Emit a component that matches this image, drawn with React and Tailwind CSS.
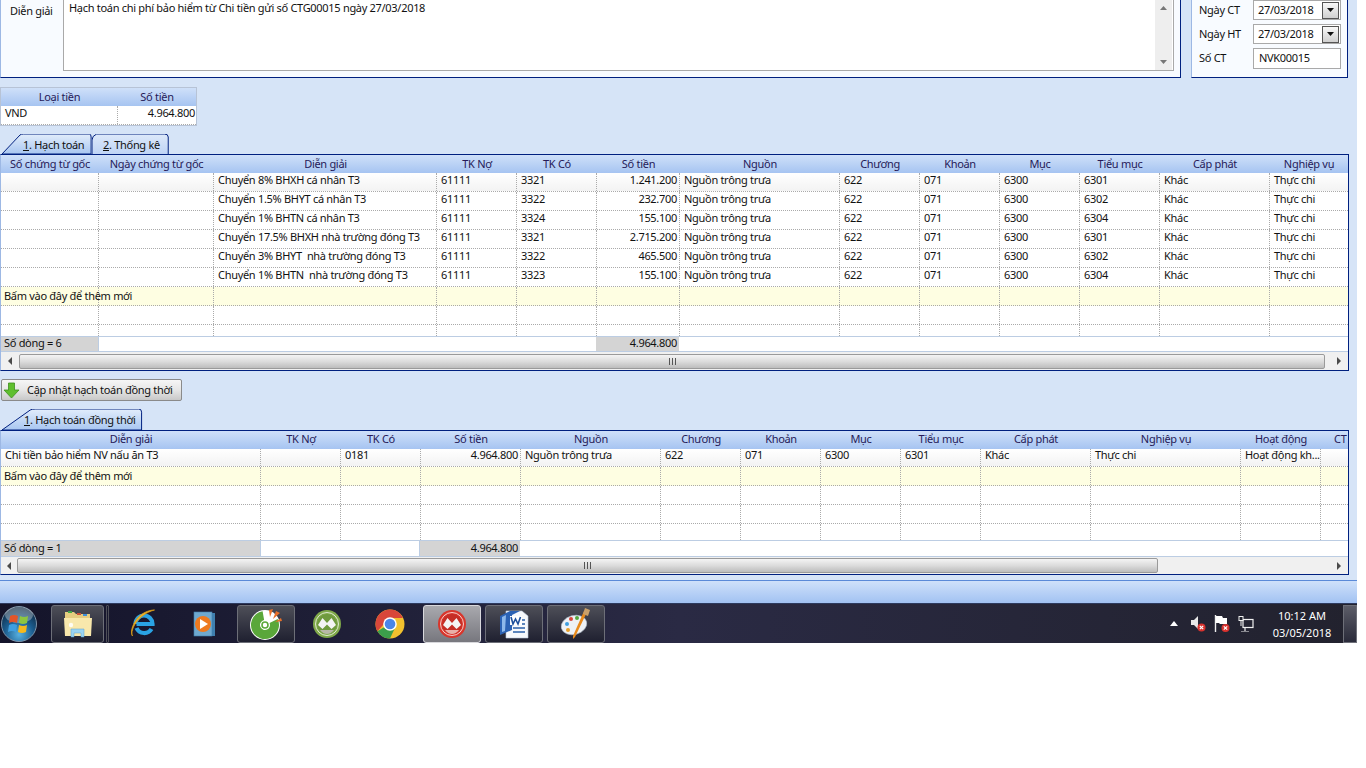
import React from "react";

const NAVY = "border-[#00207f]";

const rowsOne = [
  ["", "", "Chuyển 8% BHXH cá nhân T3", "61111", "3321", "1.241.200", "Nguồn trông trưa", "622", "071", "6300", "6301", "Khác", "Thực chi"],
  ["", "", "Chuyển 1.5% BHYT cá nhân T3", "61111", "3322", "232.700", "Nguồn trông trưa", "622", "071", "6300", "6302", "Khác", "Thực chi"],
  ["", "", "Chuyển 1% BHTN cá nhân T3", "61111", "3324", "155.100", "Nguồn trông trưa", "622", "071", "6300", "6304", "Khác", "Thực chi"],
  ["", "", "Chuyển 17.5% BHXH nhà trường đóng T3", "61111", "3321", "2.715.200", "Nguồn trông trưa", "622", "071", "6300", "6301", "Khác", "Thực chi"],
  ["", "", "Chuyển 3% BHYT  nhà trường đóng T3", "61111", "3322", "465.500", "Nguồn trông trưa", "622", "071", "6300", "6302", "Khác", "Thực chi"],
  ["", "", "Chuyển 1% BHTN  nhà trường đóng T3", "61111", "3323", "155.100", "Nguồn trông trưa", "622", "071", "6300", "6304", "Khác", "Thực chi"],
];
const headOne = ["Số chứng từ gốc", "Ngày chứng từ gốc", "Diễn giải", "TK Nợ", "TK Có", "Số tiền", "Nguồn", "Chương", "Khoản", "Mục", "Tiểu mục", "Cấp phát", "Nghiệp vụ"];

const rowsTwo = [
  ["Chi tiền bảo hiểm NV nấu ăn T3", "", "0181", "4.964.800", "Nguồn trông trưa", "622", "071", "6300", "6301", "Khác", "Thực chi", "Hoạt động kh...", ""],
];
const headTwo = ["Diễn giải", "TK Nợ", "TK Có", "Số tiền", "Nguồn", "Chương", "Khoản", "Mục", "Tiểu mục", "Cấp phát", "Nghiệp vụ", "Hoạt động", "CT"];

// 1 dong trong bang
function Row({ cols, cells, amountCol, className, lead = "leading-[14px]" }) {
  return (
    <div className={`grid ${cols} ${className}`}>
      {cells.map((c, i) => (
        <div
          key={i}
          className={`border-r border-dotted border-[#aaaaaa] last:border-r-0 whitespace-pre ${lead} ${i === amountCol ? "text-right pr-[2px]" : "pl-[4px]"}`}
        >
          {c}
        </div>
      ))}
    </div>
  );
}

// dong "bam vao day de them moi", chu tran sang cot ben
function AddRow({ cols, count }) {
  return (
    <div className={`grid ${cols} h-[19px] border-b border-dotted border-[#aaaaaa] bg-[#fefee2]`}>
      {Array.from({ length: count }).map((_, i) => (
        <div key={i} className="border-r border-dotted border-[#aaaaaa] last:border-r-0 whitespace-nowrap leading-[18px] pl-[3px]">
          {i === 0 ? "Bấm vào đây để thêm mới" : ""}
        </div>
      ))}
    </div>
  );
}

function Head({ cols, items, lead = "leading-[18px]" }) {
  return (
    <div className={`grid ${cols} h-[18px] bg-gradient-to-b from-[#cfe0f9] to-[#a6c4f1] text-[#261a58]`}>
      {items.map((h, i) => (
        <div key={i} className={`overflow-hidden whitespace-nowrap ${lead} ${h === "CT" ? "pl-[13px]" : "text-center"}`}>
          {h}
        </div>
      ))}
    </div>
  );
}

function Arrow({ dir }) {
  return (
    <svg width="6" height="8" viewBox="0 0 6 8">
      <path d={dir === "left" ? "M5 0 L1 4 L5 8 Z" : "M1 0 L5 4 L1 8 Z"} fill="#4a4a4a" />
    </svg>
  );
}

function ScrollBar({ thumb, h, left }) {
  return (
    <div className={`flex items-center bg-[#f0f0f0] ${h}`}>
      <div className={`${left} flex justify-center shrink-0`}>
        <Arrow dir="left" />
      </div>
      <div className={`${thumb} h-[15px] shrink-0 flex items-center justify-center rounded-[2px] border border-[#9a9a9a] bg-gradient-to-b from-[#f4f4f4] via-[#dcdcdc] to-[#bdbdbd]`}>
        <div className="w-[7px] h-[7px] border-x border-[#555555] flex justify-center">
          <div className="w-px h-full bg-[#555555]" />
        </div>
      </div>
      <div className="flex-1 flex justify-end pr-[6px]">
        <Arrow dir="right" />
      </div>
    </div>
  );
}

function Tab({ w, h, pad, active, children }) {
  return (
    <div className={`relative ${w} ${h}`}>
      <svg className="absolute inset-0 w-full h-full" viewBox="0 0 100 20" preserveAspectRatio="none">
        <defs>
          <linearGradient id={active ? "tabOn" : "tabOff"} x1="0" y1="0" x2="0" y2="1">
            <stop offset="0" stopColor={active ? "#e2edfb" : "#dde9fa"} />
            <stop offset="1" stopColor={active ? "#a8c6f1" : "#bfd4f5"} />
          </linearGradient>
        </defs>
        {active ? (
          <path d="M0 20 L20 1 Q21 0 24 0 L97 0 Q99 0 99 3 L99 20 Z" fill="url(#tabOn)" stroke="#00207f" strokeWidth="1" vectorEffect="non-scaling-stroke" />
        ) : (
          <path d="M0 20 L0 6 Q0 2 6 0 L94 0 Q99 0 99 3 L99 20" fill="url(#tabOff)" stroke="#00207f" strokeWidth="1" vectorEffect="non-scaling-stroke" />
        )}
      </svg>
      <span className={`relative block ${pad} leading-[22px] whitespace-nowrap`}>{children}</span>
    </div>
  );
}

function OrbIcon() {
  return (
    <svg width="38" height="38" viewBox="0 0 38 38">
      <defs>
        <radialGradient id="orb" cx="0.5" cy="0.8" r="0.75">
          <stop offset="0" stopColor="#57b0e0" />
          <stop offset="0.55" stopColor="#1b5c8e" />
          <stop offset="1" stopColor="#0e2a44" />
        </radialGradient>
      </defs>
      <circle cx="19" cy="19" r="17.5" fill="url(#orb)" stroke="#7f95aa" strokeWidth="1" />
      <ellipse cx="19" cy="10" rx="14" ry="8" fill="#ffffff" opacity="0.32" />
      <path d="M10 11 Q14 9 18 11 L17 18 Q13 16 9 18 Z" fill="#e2552a" />
      <path d="M20 11 Q24 13 28 11 L27 18 Q23 20 19 18 Z" fill="#8dc63f" />
      <path d="M9 20 Q13 18 17 20 L16 27 Q12 25 8 27 Z" fill="#3f9fe0" />
      <path d="M19 20 Q23 22 27 20 L26 27 Q22 29 18 27 Z" fill="#f6b91c" />
    </svg>
  );
}

function FolderIcon() {
  return (
    <svg width="32" height="30" viewBox="0 0 30 30">
      <path d="M2 3 H11 L13 5 H27 V24 H2 Z" fill="#e6cd80" />
      <rect x="5" y="2" width="4" height="2" fill="#46a84a" />
      <rect x="14" y="4" width="4" height="2" fill="#c8503a" />
      <rect x="20" y="5" width="4" height="2" fill="#3f8fd8" />
      <path d="M1 9 H29 L28 27 H2 Z" fill="#f8e8ac" />
      <path d="M8 20 H21 V28 H18 V24 H11 V28 H8 Z" fill="#9ad4f2" stroke="#5ba3d0" strokeWidth="0.5" />
      <circle cx="8" cy="16" r="2.2" fill="#ffffff" opacity="0.85" />
    </svg>
  );
}

function IeIcon() {
  return (
    <svg width="31" height="32" viewBox="0 0 30 32">
      <path d="M7 16 A8.5 8.5 0 1 1 24 16 H8 M8 20 A8.5 8.5 0 0 0 23 21" fill="none" stroke="#2aa3e4" strokeWidth="4.2" />
      <path d="M4 28 C1 22 10 6 26 2 C20 2 14 5 10 9 C5 14 1 24 4 28 Z" fill="#f0b428" stroke="#d89a18" strokeWidth="0.8" />
    </svg>
  );
}

function PlayerIcon() {
  return (
    <svg width="28" height="30" viewBox="0 0 28 30">
      <rect x="9" y="4" width="17" height="23" fill="#3f7fae" />
      <rect x="5" y="3" width="18" height="24" fill="#6fa9cf" stroke="#3f7fae" strokeWidth="0.6" />
      <circle cx="14" cy="15" r="8" fill="#ee7a1f" />
      <path d="M11 10 L19 15 L11 20 Z" fill="#ffffff" />
    </svg>
  );
}

function CocCocIcon() {
  return (
    <svg width="34" height="34" viewBox="0 0 34 34">
      <circle cx="16" cy="18" r="15" fill="#ffffff" />
      <circle cx="16" cy="18" r="9.5" fill="none" stroke="#5aa73a" strokeWidth="9" strokeDasharray="47 13" transform="rotate(-25 16 18)" />
      <circle cx="16" cy="18" r="3" fill="none" stroke="#5aa73a" strokeWidth="1.6" />
      <path d="M20 3 L24 2 L21 10 Z M27 4 L31 6 L24 12 Z M32 11 L33 14 L26 15 Z" fill="#e8702a" />
    </svg>
  );
}

function MisaIcon({ ring, inner, low }) {
  return (
    <svg width="30" height="30" viewBox="0 0 30 30">
      <circle cx="15" cy="15" r="14" fill={ring} />
      <circle cx="15" cy="15" r="11.5" fill="none" stroke="#ffffff" strokeWidth="1" opacity="0.75" />
      <circle cx="15" cy="15" r="10" fill={inner} />
      <path d="M6 16 L10.5 9 L15 14 L19.5 9 L24 16 L19.5 20 L15 15.5 L10.5 20 Z" fill="#f4f4f4" />
      <path d="M8 21 H22 Q19 25 15 25 Q11 25 8 21 Z" fill={low} />
    </svg>
  );
}

function ChromeIcon() {
  return (
    <svg width="30" height="30" viewBox="0 0 30 30">
      <circle cx="15" cy="15" r="14.5" fill="#f2c12e" />
      <path d="M15 .5 A14.5 14.5 0 0 0 2.4 22.2 L9 15 A6 6 0 0 1 15 9 H28 A14.5 14.5 0 0 0 15 .5 Z" fill="#d8473a" />
      <path d="M2.4 22.2 A14.5 14.5 0 0 0 15 29.5 L20.4 18 H9.6 Z" fill="#3c9f4b" />
      <circle cx="15" cy="15" r="6.8" fill="#ffffff" />
      <circle cx="15" cy="15" r="5.3" fill="#4a86e8" />
    </svg>
  );
}

function WordIcon() {
  return (
    <svg width="32" height="32" viewBox="0 0 32 32">
      <path d="M8 3 H24 L30 8 V30 H8 Z" fill="#f6f8fc" stroke="#b8c6da" strokeWidth="0.6" />
      <path d="M15 12 H27 M15 16 H27 M15 20 H27 M15 24 H27" stroke="#2a5fa8" strokeWidth="1.4" />
      <path d="M2 8 L12 3 H22 L14 7 V22 L2 27 Z" fill="#2b62b4" />
      <path d="M4 9 L8 7 L7 23 L4 24 Z" fill="#8db8ea" />
      <path d="M12 8 H24 V17 H12 Z" fill="#ffffff" />
      <path d="M13 9 L15 16 L17.5 11 L20 16 L22.5 9" fill="none" stroke="#1d4f9c" strokeWidth="1.6" />
    </svg>
  );
}

function PaintIcon() {
  return (
    <svg width="32" height="32" viewBox="0 0 32 32">
      <ellipse cx="14" cy="17" rx="13" ry="9.5" fill="#eef1f5" stroke="#a9b5c4" strokeWidth="0.6" transform="rotate(-15 14 17)" />
      <circle cx="7" cy="16" r="2" fill="#3f9fe0" />
      <circle cx="11" cy="11" r="2" fill="#d8473a" />
      <circle cx="17" cy="10" r="2" fill="#54a93f" />
      <circle cx="8" cy="22" r="2" fill="#e8a02a" />
      <path d="M27 4 L15 29 L13 31 L13 28 L24 3 Z" fill="#e88a1c" />
      <path d="M23 6 L25 0 L30 2 L28 8 Z" fill="#c9a06a" />
    </svg>
  );
}

function TaskItem({ w, framed, lit, children }) {
  const frame = lit
    ? "border border-[#d8d8dc] rounded-[3px] bg-gradient-to-b from-[#a9a9ae] to-[#77777e]"
    : framed
      ? "border border-[#6d6f78] rounded-[3px] bg-gradient-to-b from-[#4e4f58] to-[#1f2030]"
      : "";
  return <div className={`${w} h-[38px] shrink-0 flex items-center justify-center ${frame}`}>{children}</div>;
}

function Speaker() {
  return (
    <svg width="16" height="18" viewBox="0 0 16 18">
      <path d="M1 5 H4 L8 1 V14 L4 10 H1 Z" fill="#e8e8e8" />
      <circle cx="11.5" cy="12.5" r="4" fill="#d8322e" />
      <path d="M9.8 10.8 L13.2 14.2 M13.2 10.8 L9.8 14.2" stroke="#ffffff" strokeWidth="1.2" />
    </svg>
  );
}

function Flag() {
  return (
    <svg width="16" height="18" viewBox="0 0 16 18">
      <path d="M1.5 0 V17" stroke="#f0f0f0" strokeWidth="1.4" />
      <path d="M2 1 H8 L9 3 H13 V9 H6 L5 8 H2 Z" fill="#ffffff" />
      <circle cx="11.5" cy="13" r="4" fill="#d8322e" />
      <path d="M9.8 11.3 L13.2 14.7 M13.2 11.3 L9.8 14.7" stroke="#ffffff" strokeWidth="1.2" />
    </svg>
  );
}

function Network() {
  return (
    <svg width="16" height="16" viewBox="0 0 16 16">
      <rect x="5" y="3.5" width="10" height="8" fill="none" stroke="#f0f0f0" strokeWidth="1.2" />
      <path d="M3 16 H11 M7 12 V15" stroke="#f0f0f0" strokeWidth="1.2" />
      <rect x="1" y="0.5" width="4" height="4" fill="#20222e" stroke="#f0f0f0" strokeWidth="1" />
      <path d="M3 5 V10" stroke="#f0f0f0" strokeWidth="1" />
    </svg>
  );
}

function Combo({ value }) {
  return (
    <div className="h-[20px] border border-[#a9a9a9] bg-white flex items-center pl-[4px] pr-[1px] justify-between">
      <span>{value}</span>
      <div className="w-[17px] h-[17px] border border-[#555555] bg-gradient-to-b from-[#f8f8f8] to-[#d0d0d0] flex items-center justify-center">
        <svg width="7" height="4" viewBox="0 0 7 4">
          <path d="M0 0 H7 L3.5 4 Z" fill="#111111" />
        </svg>
      </div>
    </div>
  );
}

export default function App() {
  const colsOne = "grid-cols-[98px_115px_223px_80px_80px_83px_160px_80px_80px_80px_80px_110px_78px]";
  const colsTwo = "grid-cols-[260px_80px_80px_100px_140px_80px_80px_80px_80px_110px_150px_80px_27px]";
  const blank = Array(13).fill("");
  const rowLine = "h-[19px] border-b border-dotted border-[#aaaaaa]";

  return (
    <div className="w-[1357px] h-[643px] bg-[#d6e4f7] flex flex-col overflow-hidden text-[11px] tracking-[-0.3px] text-[#111111] [font-family:'Liberation_Sans',Arial,sans-serif]">
      {/* phan tren */}
      <div className="h-[78px] flex shrink-0">
        <div className={`w-[1181px] bg-[#f8fbff] border-l border-l-[#9db8e4] border-r border-b ${NAVY} flex pr-[6px]`}>
          <div className="w-[62px] pl-[9px] pt-[3px] leading-[15px]">Diễn giải</div>
          <div className="flex-1 h-[71px] border-x border-b border-[#a9a9a9] bg-white flex justify-between">
            <div className="pl-[5px] pt-[1px] leading-[14px]">Hạch toán chi phí bảo hiểm từ Chi tiền gửi số CTG00015 ngày 27/03/2018</div>
            <div className="w-[17px] mr-[1px] bg-[#eeeeee] flex flex-col justify-between items-center py-[6px]">
              <svg width="7" height="4" viewBox="0 0 7 4"><path d="M0 4 H7 L3.5 0 Z" fill="#777777" /></svg>
              <svg width="7" height="4" viewBox="0 0 7 4"><path d="M0 0 H7 L3.5 4 Z" fill="#777777" /></svg>
            </div>
          </div>
        </div>
        <div className={`ml-[10px] w-[157px] bg-[#f8fbff] border-l border-l-[#9db8e4] border-r border-b ${NAVY} pl-[7px] pr-[6px] flex flex-col gap-[4px]`}>
          <div className="flex items-center h-[20px]">
            <span className="w-[54px]">Ngày CT</span>
            <div className="flex-1"><Combo value="27/03/2018" /></div>
          </div>
          <div className="flex items-center h-[20px]">
            <span className="w-[54px]">Ngày HT</span>
            <div className="flex-1"><Combo value="27/03/2018" /></div>
          </div>
          <div className="flex items-center h-[21px]">
            <span className="w-[54px]">Số CT</span>
            <div className="flex-1 h-[21px] border border-[#a9a9a9] bg-white pl-[5px] leading-[18px]">NVK00015</div>
          </div>
        </div>
      </div>

      {/* bang loai tien */}
      <div className="mt-[9px] w-[197px] h-[39px] shrink-0 border border-[#b7c3d6]">
        <div className="grid grid-cols-[117px_78px] h-[18px] bg-gradient-to-b from-[#cfe0f9] to-[#a6c4f1] text-[#261a58] text-center leading-[18px]">
          <div>Loại tiền</div>
          <div>Số tiền</div>
        </div>
        <div className="grid grid-cols-[117px_78px] h-[19px] bg-white leading-[14px] border-b border-dotted border-[#aaaaaa]">
          <div className="pl-[4px] border-r border-dotted border-[#aaaaaa]">VND</div>
          <div className="text-right pr-[1px]">4.964.800</div>
        </div>
      </div>

      {/* tab 1 */}
      <div className="mt-[8px] flex h-[20px] shrink-0 pl-[2px]">
        <Tab w="w-[90px]" h="h-[20px]" pad="pl-[21px]" active><u>1</u>. Hạch toán</Tab>
        <Tab w="w-[77px]" h="h-[20px]" pad="pl-[11px]"><u>2</u>. Thống kê</Tab>
      </div>

      {/* luoi hach toan */}
      <div className={`w-[1349px] shrink-0 border-t border-r border-b ${NAVY} border-l border-l-[#9db8e4] bg-white`}>
        <Head cols={colsOne} items={headOne} />
        {rowsOne.map((r, i) => (
          <Row key={i} cols={colsOne} cells={r} amountCol={5} className={`${rowLine} ${i === 0 ? "bg-gradient-to-b from-white to-[#f3f3f3]" : ""}`} />
        ))}
        <AddRow cols={colsOne} count={13} />
        <Row cols={colsOne} cells={blank} className={rowLine} />
        <Row cols={colsOne} cells={blank} className="h-[11px]" />
        <div className="flex h-[16px] border-y border-[#bccde3] leading-[12px]">
          <div className="w-[97px] bg-[#d4d4d4] pl-[3px]">Số dòng = 6</div>
          <div className="w-[498px] border-l border-[#bccde3]" />
          <div className="w-[83px] bg-[#d4d4d4] text-right pr-[2px]">4.964.800</div>
        </div>
        <ScrollBar thumb="w-[1306px]" h="h-[18px]" left="w-[18px]" />
      </div>

      {/* nut cap nhat */}
      <div className="mt-[8px] ml-[1px] w-[181px] h-[22px] shrink-0 border border-[#8a8a8a] rounded-[2px] bg-gradient-to-b from-[#f6f6f6] via-[#e6e6e6] to-[#c8c8c8] flex items-center pl-[1px] gap-[7px]">
        <svg className="shrink-0" width="17" height="17" viewBox="0 0 17 17">
          <path d="M5.5 1 H11.5 V8 H16 L8.5 16 L1 8 H5.5 Z" fill="#5fbf2e" stroke="#3c8f1e" strokeWidth="0.8" />
        </svg>
        <span className="whitespace-nowrap">Cập nhật hạch toán đồng thời</span>
      </div>

      {/* tab 2 */}
      <div className="mt-[8px] h-[21px] shrink-0 pl-[2px]">
        <Tab w="w-[141px]" h="h-[21px]" pad="pl-[22px]" active><u>1</u>. Hạch toán đồng thời</Tab>
      </div>

      {/* luoi hach toan dong thoi */}
      <div className={`w-[1349px] shrink-0 border-t border-r border-b ${NAVY} border-l border-l-[#9db8e4] bg-white`}>
        <Head cols={colsTwo} items={headTwo} lead="leading-[16px]" />
        {rowsTwo.map((r, i) => (
          <Row key={i} cols={colsTwo} cells={r} amountCol={3} lead="leading-[12px]" className="h-[18px] border-b border-dotted border-[#aaaaaa] bg-gradient-to-b from-white to-[#f3f3f3]" />
        ))}
        <AddRow cols={colsTwo} count={13} />
        <Row cols={colsTwo} cells={blank} className={rowLine} />
        <Row cols={colsTwo} cells={blank} className={rowLine} />
        <Row cols={colsTwo} cells={blank} className="h-[16px]" />
        <div className="flex h-[17px] border-y border-[#bccde3] leading-[13px]">
          <div className="w-[259px] bg-[#d4d4d4] pl-[3px]">Số dòng = 1</div>
          <div className="w-[160px] border-x border-[#bccde3]" />
          <div className="w-[100px] bg-[#d4d4d4] text-right pr-[2px]">4.964.800</div>
        </div>
        <ScrollBar thumb="w-[1141px]" h="h-[17px]" left="w-[16px]" />
      </div>

      {/* thanh duoi form */}
      <div className="mt-[5px] h-[23px] shrink-0 border-t border-[#5a8ad8] bg-gradient-to-b from-[#cfe1fa] to-[#a2c2f2]" />

      {/* taskbar */}
      <div className="h-[40px] shrink-0 border-t border-[#2d3a5e] bg-gradient-to-r from-[#14142a] via-[#2a2a44] to-[#22222e] flex items-center">
        <div className="w-[38px] shrink-0 flex justify-center">
          <OrbIcon />
        </div>
        <div className="ml-[13px]">
          <TaskItem w="w-[53px]" framed><FolderIcon /></TaskItem>
        </div>
        <div className="ml-[2px] w-[3px] h-[38px] shrink-0 rounded-[1px] border border-[#4e4f58]" />
        <div className="w-[4px] shrink-0" />
        <TaskItem w="w-[60px]"><IeIcon /></TaskItem>
        <TaskItem w="w-[60px]"><PlayerIcon /></TaskItem>
        <div className="w-[4px] shrink-0" />
        <TaskItem w="w-[58px]" framed><CocCocIcon /></TaskItem>
        <div className="w-[2px] shrink-0" />
        <TaskItem w="w-[60px]"><MisaIcon ring="#7fa84a" inner="#6f9a3e" low="#b8b8a8" /></TaskItem>
        <div className="w-[3px] shrink-0" />
        <TaskItem w="w-[60px]"><ChromeIcon /></TaskItem>
        <div className="w-[3px] shrink-0" />
        <TaskItem w="w-[58px]" lit><MisaIcon ring="#d8362c" inner="#c52e26" low="#e8b0a8" /></TaskItem>
        <div className="w-[4px] shrink-0" />
        <TaskItem w="w-[58px]" framed><WordIcon /></TaskItem>
        <div className="w-[4px] shrink-0" />
        <TaskItem w="w-[58px]" framed><PaintIcon /></TaskItem>
        <div className="flex-1" />
        <svg className="mr-[12px]" width="8" height="5" viewBox="0 0 8 5"><path d="M0 5 H8 L4 0 Z" fill="#ffffff" /></svg>
        <div className="mr-[8px]"><Speaker /></div>
        <div className="mr-[8px]"><Flag /></div>
        <div className="mr-[17px]"><Network /></div>
        <div className="w-[62px] text-center text-white leading-[17px] text-[11px] tracking-normal whitespace-nowrap">
          <div>10:12 AM</div>
          <div>03/05/2018</div>
        </div>
        <div className="ml-[10px] w-[14px] h-[38px] border border-[#6d6f78] bg-gradient-to-b from-[#5c5d68] to-[#2a2b3a]" />
      </div>
    </div>
  );
}
